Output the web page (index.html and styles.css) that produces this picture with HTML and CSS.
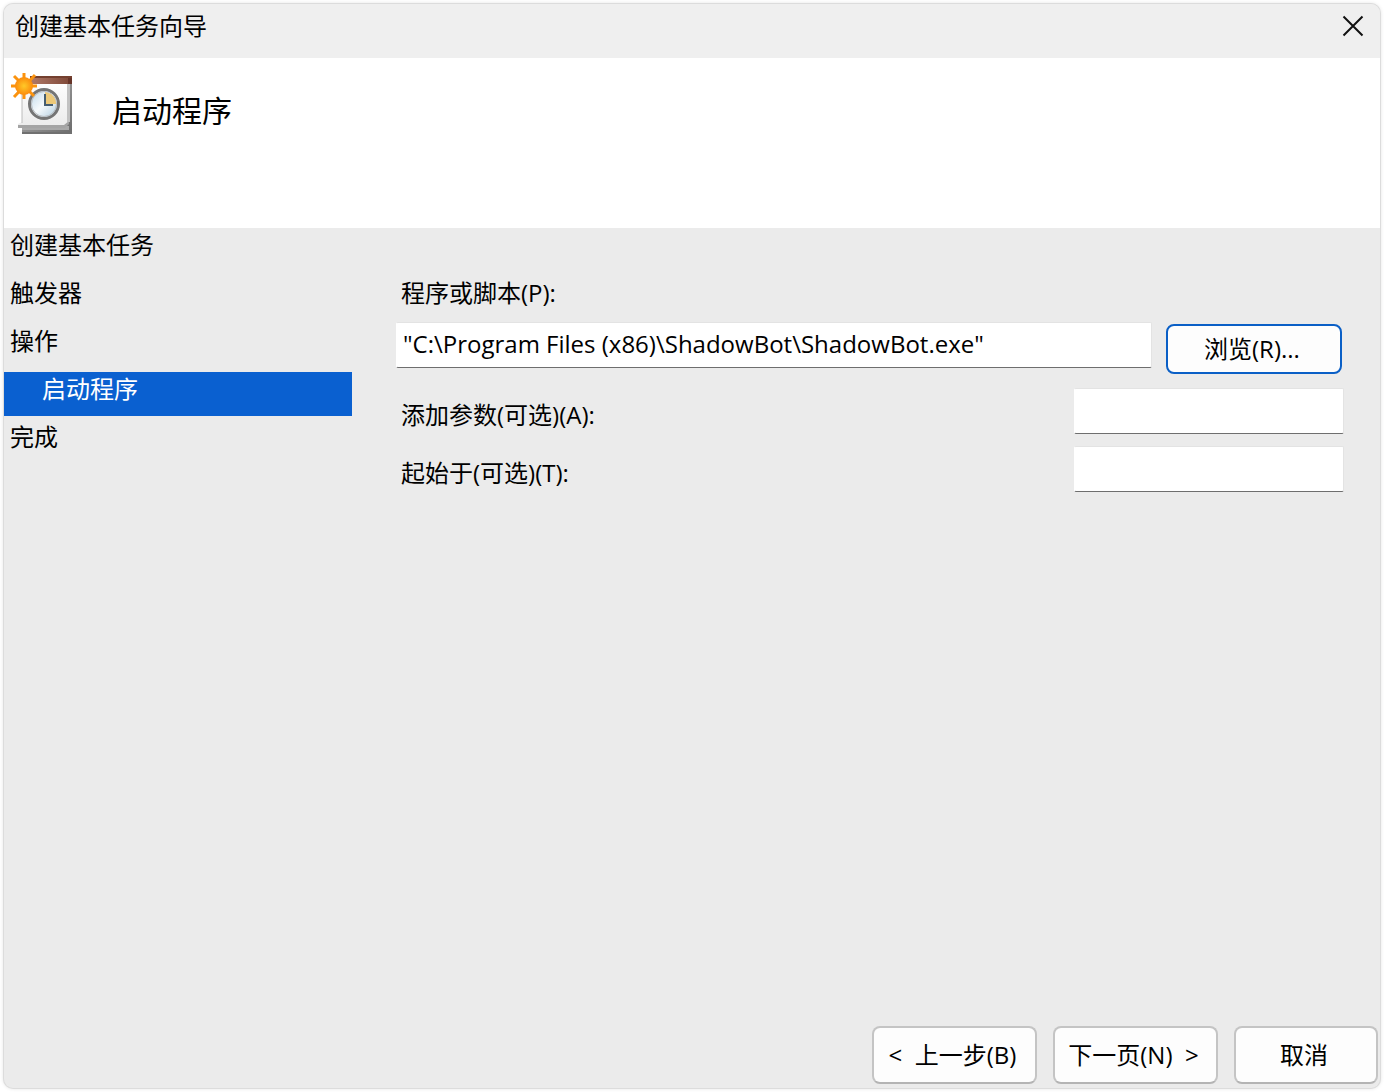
FILE: index.html
```html
<!DOCTYPE html>
<html lang="zh-CN">
<head>
<meta charset="utf-8">
<meta name="viewport" content="width=device-width, initial-scale=1">
<title>创建基本任务向导</title>
<link rel="stylesheet" href="styles.css">
</head>
<body>
<div class="window">
  <header class="titlebar">
    <span class="title">创建基本任务向导</span>
    <button class="close" type="button" aria-label="关闭">
      <svg width="22" height="22" viewBox="0 0 22 22" aria-hidden="true"><path d="M1.500 1.500 20.500 20.500M20.500 1.500 1.500 20.500" stroke="#111" stroke-width="2" fill="none"/></svg>
    </button>
  </header>
  <div class="banner">
    <svg class="task-icon" width="64" height="64" viewBox="0 0 64 64" aria-hidden="true">
      <defs>
        <linearGradient id="paper" x1="0" y1="0" x2="0" y2="1"><stop offset="0" stop-color="#fff"/><stop offset="1" stop-color="#ebebeb"/></linearGradient>
        <linearGradient id="stack" x1="0" y1="0" x2="1" y2="1"><stop offset="0" stop-color="#b5b5b5"/><stop offset="1" stop-color="#6c6c6c"/></linearGradient>
        <linearGradient id="bar" x1="0" y1="0" x2="1" y2="0"><stop offset="0" stop-color="#b07a68"/><stop offset="1" stop-color="#7c4535"/></linearGradient>
        <linearGradient id="face" x1="0" y1="0" x2="1" y2="1"><stop offset="0" stop-color="#b9d5e8"/><stop offset=".5" stop-color="#f6fafc"/><stop offset="1" stop-color="#a9c8dc"/></linearGradient>
        <radialGradient id="sun"><stop offset="0" stop-color="#ffc928"/><stop offset="1" stop-color="#fb8b0c"/></radialGradient>
      </defs>
      <path d="M12 8H62V62H12Z" fill="url(#stack)"/>
      <path d="M12 54H59V58H12Z" fill="#a9a9a9"/>
      <path d="M12 60H62V62H12Z" fill="#707070"/>
      <path d="M12 8H58V52L54 55H8V52L12 50Z" fill="url(#paper)"/>
      <path d="M8 53H54L59 49V52L55 56H8Z" fill="#a4a4a4"/>
      <path d="M57 12H60V50H57Z" fill="#c2c2c2"/>
      <path d="M12 12V51" stroke="#bcbcbc" stroke-width="1"/>
      <path d="M20 4H62V12H20Z" fill="url(#bar)"/>
      <path d="M20 4H62V6H20Z" fill="#74402f"/>
      <path d="M58 6H62V12H58Z" fill="#673428"/>
      <circle cx="34" cy="32" r="14.500" fill="url(#face)" stroke="#757575" stroke-width="3"/>
      <circle cx="34" cy="32" r="12.500" fill="none" stroke="#b8bcc0"/>
      <path d="M35 32V20A12 12 0 0 1 46 32Z" fill="#edc978"/>
      <path d="M35 22V33H43" fill="none" stroke="#465e70" stroke-width="2"/>
      <path d="M14 1V27M1 14H27M4 4 24 24M25 3 4 25" stroke="#fb930e" stroke-width="3"/>
      <circle cx="14" cy="14" r="9" fill="url(#sun)"/>
    </svg>
    <h1 class="heading">启动程序</h1>
  </div>
  <div class="body">
    <nav class="steps" aria-label="步骤">
      <div class="step">创建基本任务</div>
      <div class="step">触发器</div>
      <div class="step">操作</div>
      <div class="step step-current" aria-current="step">启动程序</div>
      <div class="step">完成</div>
    </nav>
    <form class="form">
      <label class="label" for="program">程序或脚本(P):</label>
      <div class="row row-program">
        <input class="field field-wide" id="program" type="text" value="&quot;C:\Program Files (x86)\ShadowBot\ShadowBot.exe&quot;">
        <button class="button browse" type="button">浏览(R)...</button>
      </div>
      <div class="row">
        <label class="label" for="args">添加参数(可选)(A):</label>
        <input class="field field-short" id="args" type="text">
      </div>
      <div class="row">
        <label class="label" for="start">起始于(可选)(T):</label>
        <input class="field field-short" id="start" type="text">
      </div>
    </form>
  </div>
  <footer class="footer">
    <button class="button nav-button" type="button">&lt;&nbsp; 上一步(B)</button>
    <button class="button nav-button" type="button">下一页(N)&nbsp; &gt;</button>
    <button class="button cancel" type="button">取消</button>
  </footer>
</div>
</body>
</html>
```
FILE: styles.css
```css
* { box-sizing: border-box; }

body {
  margin: 0;
  padding: 4px;
  min-height: 100vh;
  display: flex;
  background: #fff;
  color: #000;
  font: 24px/34px "Open Sans", "Noto Sans CJK SC", sans-serif;
}

button, input { font: inherit; color: inherit; margin: 0; }

.window {
  flex: 1;
  display: flex;
  flex-direction: column;
  overflow: hidden;
  border-radius: 9px;
  background: #ebebeb;
  box-shadow: 0 0 0 1px #dcdcdc, 0 0 4px rgba(0, 0, 0, .16);
}

.titlebar {
  height: 54px;
  padding: 0 16px 10px 11px;
  display: flex;
  align-items: center;
  justify-content: space-between;
  background: #efefef;
}

.close {
  display: flex;
  padding: 0;
  border: 0;
  background: none;
}

.banner {
  height: 170px;
  padding: 14px 6px;
  display: flex;
  gap: 38px;
  background: #fff;
}

.heading {
  margin: 20px 0 0;
  font-size: 30px;
  line-height: 38px;
  font-weight: 400;
}

.body { flex: 1; display: flex; }

.steps {
  width: 348px;
  display: flex;
  flex-direction: column;
  gap: 4px;
}

.step { height: 44px; padding-left: 6px; }

.step-current {
  padding-left: 38px;
  background: #0a60d0;
  color: #fff;
}

.form {
  flex: 1;
  padding: 48px 36px 0 44px;
  display: flex;
  flex-direction: column;
  gap: 12px;
}

.row {
  display: flex;
  align-items: center;
  justify-content: space-between;
}

.row-program { align-items: flex-start; gap: 12px; }

.label { padding-left: 5px; }

.row .label { padding-top: 8px; }

.field {
  height: 46px;
  padding: 0 6px 4px;
  border: 1px solid #e3e3e3;
  border-bottom-color: #6e6e6e;
  border-left-color: #fff;
  border-radius: 2px;
  background: #fff;
  outline: 0;
}

.field-wide { flex: 1; min-width: 0; }

.field-short { width: 270px; }

.button {
  height: 58px;
  padding: 0 4px 0 0;
  border: 2px solid #c4c4c4;
  border-bottom-color: #b4b4b4;
  border-radius: 8px;
  background: #fdfdfd;
  white-space: nowrap;
}

.browse {
  width: 176px;
  height: 50px;
  margin: 2px;
  border-color: #0a5fc6;
}

.footer {
  padding: 0 2px 4px;
  display: flex;
  justify-content: flex-end;
  gap: 16px;
}

.nav-button { width: 165px; }

.cancel { width: 144px; }
```
